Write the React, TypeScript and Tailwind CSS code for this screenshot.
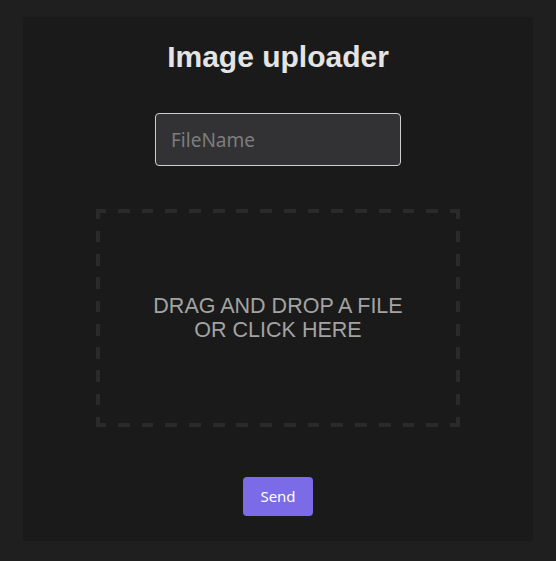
export default function App() {
  return (
    <div className="min-h-[561px] bg-[#1f1f1f] pt-[17px] pb-[20px] px-[23px]">
      <div className="bg-[#1a1a1a] h-[524px] flex flex-col items-center pt-[23px]">
        <h1 className="text-[30px] leading-[34px] font-bold text-[#e4e4e4] [font-family:'Liberation_Sans',Arial,sans-serif]">
          Image uploader
        </h1>
        <input
          type="text"
          placeholder="FileName"
          className="mt-[39px] w-[246px] h-[53px] rounded-[4px] border border-[#cfcfcf] bg-[#323234] px-[15px] text-[19px] text-[#dddddd] placeholder:text-[#7d7d7d] outline-none [font-family:'Noto_Sans',sans-serif]"
        />
        {/* dashed drop zone, dash pattern drawn with gradients to match the 12px dashes */}
        <div className="mt-[43px] w-[364px] h-[218px] flex items-center justify-center cursor-pointer [background:repeating-linear-gradient(90deg,transparent_10px_21.86px,#2a2a2a_21.86px_33.72px)_top/100%_4px_no-repeat,repeating-linear-gradient(90deg,transparent_10px_21.86px,#2a2a2a_21.86px_33.72px)_bottom/100%_4px_no-repeat,repeating-linear-gradient(180deg,transparent_10px_21.65px,#2a2a2a_21.65px_33.3px)_left/4px_100%_no-repeat,repeating-linear-gradient(180deg,transparent_10px_21.65px,#2a2a2a_21.65px_33.3px)_right/4px_100%_no-repeat]">
          <p className="text-center text-[21.5px] leading-[24px] text-[#a3a3a3] [font-family:'Liberation_Sans',Arial,sans-serif]">
            DRAG AND DROP A FILE
            <br />
            OR CLICK HERE
          </p>
        </div>
        <button
          type="button"
          className="mt-[50px] w-[70px] h-[39px] rounded-[4px] bg-[#7b6be6] text-white text-[15px] [font-family:'Noto_Sans',sans-serif]"
        >
          Send
        </button>
      </div>
    </div>
  );
}
